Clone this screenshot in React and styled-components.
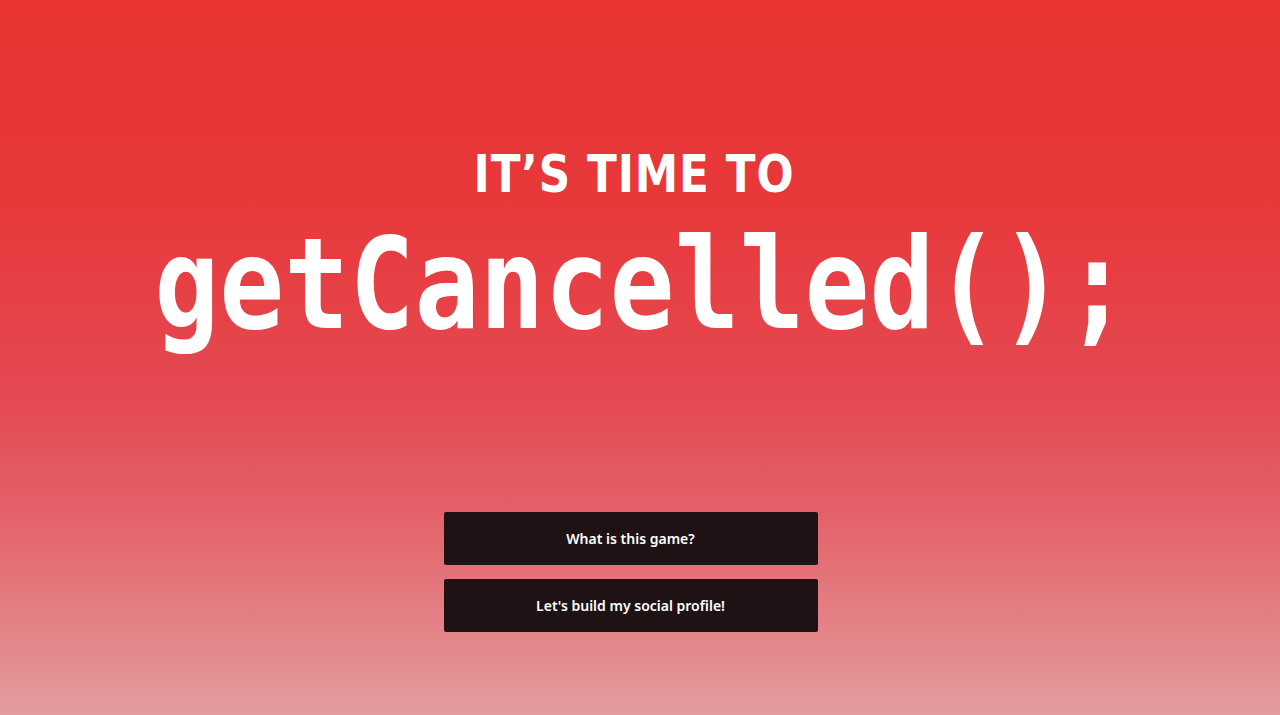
import React from 'react';
import styled, { createGlobalStyle } from 'styled-components';

const GlobalStyle = createGlobalStyle`
  html, body {
    margin: 0;
    padding: 0;
  }
  body {
    font-family: "Noto Sans", "DejaVu Sans", sans-serif;
  }
`;

const Page = styled.main`
  min-height: 715px;
  display: flex;
  flex-direction: column;
  align-items: center;
  background: linear-gradient(
    180deg,
    #e93433 0%,
    #e8383a 28%,
    #e44a53 56%,
    #e35e66 70%,
    #e37b80 84%,
    #e59ca0 100%
  );
  overflow: hidden;
`;

const Hero = styled.header`
  display: flex;
  flex-direction: column;
  align-items: center;
  padding-top: 144px;
  color: #fff;
`;

const Kicker = styled.h2`
  margin: 0 0 0 -11px;
  font-family: "DejaVu Sans", sans-serif;
  font-weight: 700;
  font-size: 52px;
  line-height: 60px;
  letter-spacing: 1px;
  transform: scaleX(0.84);
  transform-origin: center;
  white-space: nowrap;
`;

const Title = styled.h1`
  margin: 15px 0 0 4px;
  font-family: "DejaVu Sans Mono", monospace;
  font-weight: 700;
  font-size: 108px;
  line-height: 130px;
  transform: scaleY(1.18);
  transform-origin: center;
  white-space: nowrap;
`;

const Actions = styled.nav`
  display: flex;
  flex-direction: column;
  gap: 14px;
  margin-top: 163px;
  margin-left: -19px;
`;

const Button = styled.button`
  width: 374px;
  height: 53px;
  border: none;
  border-radius: 2px;
  background: #1e1214;
  color: #fff;
  font-family: "Noto Sans", sans-serif;
  font-weight: 600;
  font-size: 14px;
  cursor: pointer;
`;

export default function App() {
  return (
    <>
      <GlobalStyle />
      <Page>
        <Hero>
          <Kicker>IT’S TIME TO</Kicker>
          <Title>getCancelled();</Title>
        </Hero>
        <Actions>
          <Button>What is this game?</Button>
          <Button>Let's build my social profile!</Button>
        </Actions>
      </Page>
    </>
  );
}
